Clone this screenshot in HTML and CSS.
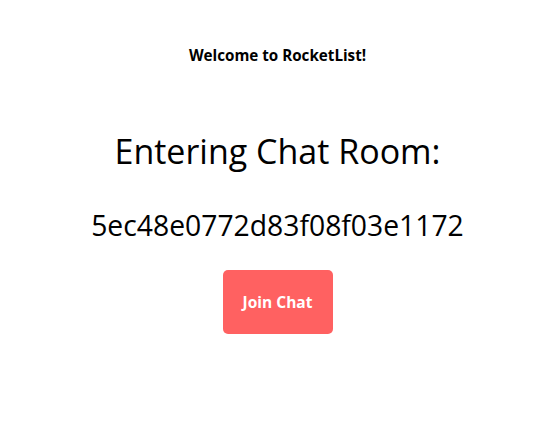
FILE: index.html
```html
<!DOCTYPE html>
<html>
<head>
<meta charset="utf-8">
<link rel="stylesheet" href="styles.css">
</head>
<body>
<div class="page">
  <div class="welcome">Welcome to RocketList!</div>
  <h1 class="title">Entering Chat Room:</h1>
  <div class="room-id">5ec48e0772d83f08f03e1172</div>
  <button class="join">Join Chat</button>
</div>
</body>
</html>
```
FILE: styles.css
```css
html, body {
  margin: 0;
  padding: 0;
  background: #fff;
}
.page {
  display: flex;
  flex-direction: column;
  align-items: center;
  font-family: "Open Sans", "Noto Sans", sans-serif;
  color: #000;
  padding-top: 44px;
}
.welcome {
  font-size: 15.2px;
  font-weight: 700;
  line-height: 22px;
}
.title {
  margin: 61px 0 0;
  font-size: 34px;
  font-weight: 400;
  line-height: 48px;
}
.room-id {
  margin-top: 30px;
  font-size: 28.3px;
  line-height: 40px;
}
.join {
  margin-top: 25px;
  width: 110px;
  height: 64px;
  border: none;
  border-radius: 5px;
  background: #ff6161;
  color: #fff;
  font-family: "Open Sans", sans-serif;
  font-weight: 700;
  font-size: 15.5px;
}
```
